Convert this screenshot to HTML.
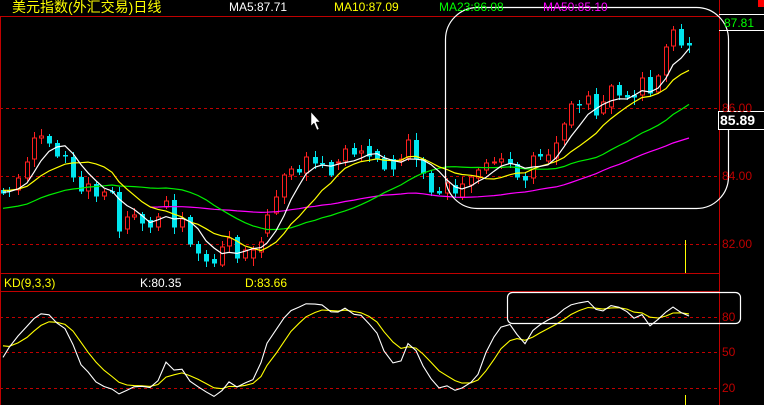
<!DOCTYPE html>
<html><head><meta charset="utf-8"><style>
html,body{margin:0;padding:0;background:#000;}
#w{position:relative;width:764px;height:405px;overflow:hidden;background:#000;font-family:"Liberation Sans","Noto Sans CJK SC",sans-serif;}
.t{position:absolute;font-size:12px;line-height:14px;white-space:nowrap;}
svg{position:absolute;left:0;top:0;}
</style></head><body><div id="w">
<svg id="s" width="764" height="405" xmlns="http://www.w3.org/2000/svg">
<g stroke="#c00000" stroke-width="1" fill="none" shape-rendering="crispEdges">
<line x1="0" y1="16.5" x2="719" y2="16.5"/>
<line x1="719.5" y1="0" x2="719.5" y2="405"/>
<line x1="0.5" y1="16" x2="0.5" y2="405"/>
<line x1="0" y1="273.5" x2="719" y2="273.5"/>
<line x1="0" y1="291.5" x2="719" y2="291.5"/>
</g>
<g stroke="#c00000" stroke-width="1" stroke-dasharray="3,3" shape-rendering="crispEdges">
<line x1="0" y1="108.5" x2="719" y2="108.5"/>
<line x1="0" y1="176.5" x2="719" y2="176.5"/>
<line x1="0" y1="244.5" x2="719" y2="244.5"/>
<line x1="0" y1="317.5" x2="719" y2="317.5"/>
<line x1="0" y1="352.5" x2="719" y2="352.5"/>
<line x1="0" y1="388.5" x2="719" y2="388.5"/>
</g>
<rect x="758" y="0" width="6" height="7" fill="#ff0000"/>
<g stroke="#ffff00" shape-rendering="crispEdges"><line x1="685.5" y1="240" x2="685.5" y2="273"/><line x1="685.5" y1="395" x2="685.5" y2="405"/></g>
<g id="c"></g>
<rect x="445.5" y="7.5" width="283" height="201" rx="32" fill="none" stroke="#fff" stroke-width="1.2"/>
<rect x="507.5" y="292.5" width="233" height="31" rx="5" fill="none" stroke="#fff" stroke-width="1.2"/>
<g stroke="#fff" shape-rendering="crispEdges"><line x1="719" y1="14.5" x2="764" y2="14.5"/><line x1="719" y1="30.5" x2="764" y2="30.5"/></g>
<rect x="718.5" y="111.5" width="46" height="18" fill="#000" stroke="#fff"/>
<path d="M311 112 L311 126 L314 123 L317 130 L319 129 L316 122 L320 122 Z" fill="#fff" stroke="#000" stroke-width="0.5"/>
</svg>
<div class="t" style="left:12px;top:-1px;font-size:14px;line-height:16px;color:#ffff00">美元指数(外汇交易)日线</div>
<div class="t" style="left:229px;top:0;color:#fff">MA5:87.71</div>
<div class="t" style="left:334px;top:0;color:#ffff00">MA10:87.09</div>
<div class="t" style="left:439px;top:0;color:#00ff00">MA23:86.08</div>
<div class="t" style="left:543px;top:0;color:#ff00ff">MA50:85.10</div>
<div class="t" style="left:724px;top:16px;color:#00ff00">87.81</div>
<div class="t" style="left:722px;top:101px;color:#c00000">86.00</div>
<div class="t" style="left:720px;top:112px;color:#fff;font-size:14px;line-height:17px;font-weight:bold">85.89</div>
<div class="t" style="left:722px;top:169px;color:#c00000">84.00</div>
<div class="t" style="left:722px;top:237px;color:#c00000">82.00</div>
<div class="t" style="left:4px;top:276px;color:#ffff00">KD(9,3,3)</div>
<div class="t" style="left:140px;top:276px;color:#fff">K:80.35</div>
<div class="t" style="left:245px;top:276px;color:#ffff00">D:83.66</div>
<div class="t" style="left:722px;top:310px;color:#c00000">80</div>
<div class="t" style="left:722px;top:345px;color:#c00000">50</div>
<div class="t" style="left:722px;top:381px;color:#c00000">20</div>
</div>
<script>
var D=[[3,190,193],[9,190,190],[18,190,178],[27,178,162],[34,159,138],[41,138,136],[49,136,143],[57,143,156],[65,155,156],[73,157,177],[81,177,191],[88,191,184],[96,184,196],[104,196,192],[112,191,192],[119,192,231],[127,229,217],[134,217,215],[142,214,223],[150,220,227],[158,227,217],[166,207,201],[174,200,227],[182,227,219],[190,217,244],[198,244,253],[206,254,261],[214,259,263],[222,265,247],[229,246,238],[237,237,258],[245,258,250],[253,258,250],[261,252,242],[267,233,215],[276,213,197],[284,197,175],[291,175,169],[299,169,172],[306,173,157],[315,157,163],[322,163,164],[331,162,175],[338,163,162],[345,161,149],[354,148,154],[361,153,151],[369,146,156],[377,151,158],[384,158,169],[393,159,169],[401,161,159],[408,158,140],[416,140,159],[423,159,173],[431,173,192],[439,191,193],[447,193,183],[455,185,193],[462,197,184],[471,185,177],[478,178,170],[486,170,163],[494,163,162],[501,162,159],[510,159,163],[517,164,177],[525,176,180],[533,178,156],[540,154,156],[548,161,155],[556,158,143],[564,140,124],[571,125,104],[579,104,105],[588,104,96],[596,94,115],[603,113,102],[611,107,86],[619,85,95],[627,95,97],[634,95,97],[642,95,78],[650,77,93],[658,92,76],[666,75,47],[673,46,30],[681,29,45],[689,43,45]];
var ns="http://www.w3.org/2000/svg",g=document.getElementById('c'),h='';
var H=[],L=[],C=[];
D.forEach(function(d,i){var x=d[0]+0.5,o=d[1],c=d[2],t=Math.min(o,c),b=Math.max(o,c);
var r1=2+((i*7)%6),r2=2+((i*5)%7);var hy=t-r1,ly=b+r2;H.push(hy);L.push(ly);C.push(c);
var up=c<o;var col=up?'#ff2020':'#00e5ee';
h+='<line x1="'+x+'" y1="'+hy+'" x2="'+x+'" y2="'+ly+'" stroke="'+col+'" shape-rendering="crispEdges"/>';
var hh=Math.max(b-t,1);
if(up)h+='<rect x="'+(x-2)+'" y="'+t+'" width="4" height="'+hh+'" fill="#000" stroke="'+col+'" shape-rendering="crispEdges"/>';
else h+='<rect x="'+(x-2.5)+'" y="'+t+'" width="5" height="'+(hh+0.5)+'" fill="'+col+'" shape-rendering="crispEdges"/>';});
function ma(n,pad,start){var p=[];for(var i=start;i<C.length;i++){var s=0;for(var k=i-n+1;k<=i;k++)s+=(k<0?pad:C[k]);p.push(D[i][0]+','+(s/n).toFixed(1));}return p.join(' ');}
h+='<polyline points="'+ma(50,222,19)+'" fill="none" stroke="#ff00ff" stroke-width="1.2"/>';
h+='<polyline points="'+ma(23,209,0)+'" fill="none" stroke="#00ee00" stroke-width="1.2"/>';
h+='<polyline points="'+ma(10,190,0)+'" fill="none" stroke="#ffff00" stroke-width="1.2"/>';
h+='<polyline points="'+ma(5,192,0)+'" fill="none" stroke="#ffffff" stroke-width="1.2"/>';
var K=54,Dd=60,pk=[],pd=[];
for(var i=0;i<C.length;i++){var hy=1e9,ly=-1e9;for(var k=Math.max(0,i-8);k<=i;k++){hy=Math.min(hy,H[k]);ly=Math.max(ly,L[k]);}
var rsv=ly>hy?(ly-C[i])/(ly-hy)*100:50;K=K*2/3+rsv/3;Dd=Dd*2/3+K/3;
pk.push(D[i][0]+','+Math.min(404,412-1.2*K).toFixed(1));pd.push(D[i][0]+','+Math.min(404,412-1.2*Dd).toFixed(1));}
h+='<polyline points="'+pd.join(' ')+'" fill="none" stroke="#ffff00" stroke-width="1.1"/>';
h+='<polyline points="'+pk.join(' ')+'" fill="none" stroke="#ffffff" stroke-width="1.1"/>';
g.innerHTML=h;
</script>
</body></html>
